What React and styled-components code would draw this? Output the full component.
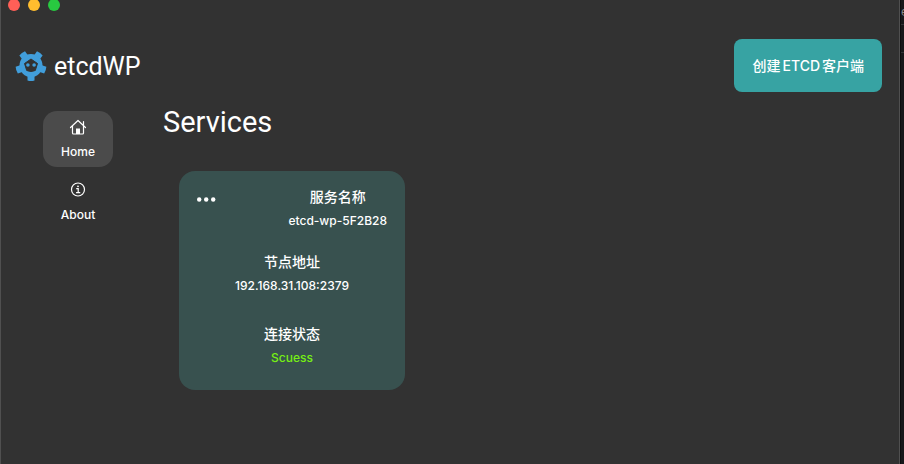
import React from "react";
import styled, { createGlobalStyle } from "styled-components";

const GlobalStyle = createGlobalStyle`
  *, *::before, *::after { box-sizing: border-box; }
  body {
    margin: 0;
    background: #17181a;
    color: #fff;
    font-family: Inter, "Noto Sans CJK SC", sans-serif;
    -webkit-font-smoothing: antialiased;
  }
  h1, h2, p, dl, dt, dd { margin: 0; font-weight: 400; }
`;

const Desktop = styled.div`
  display: grid;
  grid-template-columns: minmax(0, 1fr) 4px;
  min-height: 100vh;
`;

const Window = styled.div`
  display: flex;
  flex-direction: column;
  background: #323232;
  border: solid #505050;
  border-width: 0 1px;
`;

const Behind = styled.aside`
  overflow: hidden;
  color: #8a8a8a;
  font-size: 12px;
  line-height: 24px;
  border-left: 1px solid #0c0d0e;
`;

const BehindRow = styled.div`
  height: ${(p) => p.$height}px;
  border-bottom: 1px solid #333537;
`;

const TitleBar = styled.div`
  display: flex;
  align-items: flex-end;
  gap: 8px;
  height: 11px;
  padding-left: 7px;
  overflow: hidden;
`;

const Light = styled.button`
  flex: none;
  width: 12px;
  height: 12px;
  padding: 0;
  border: 0;
  border-radius: 50%;
  background: ${(p) => p.$color};
`;

const Header = styled.header`
  display: flex;
  align-items: center;
  justify-content: space-between;
  padding: 28px 17px 0 14px;
`;

const Brand = styled.div`
  display: flex;
  align-items: center;
  gap: 7px;
`;

const BrandName = styled.h1`
  padding-top: 2px;
  font-family: Roboto, Inter, sans-serif;
  font-size: 25px;
  line-height: 32px;
`;

const CreateButton = styled.button`
  display: flex;
  gap: 2px;
  padding: 16px 18px;
  border: 0;
  border-radius: 8px;
  background: #37a3a3;
  color: #fff;
  font: 500 14px/21px Inter, "Noto Sans CJK SC", sans-serif;
`;

const Body = styled.div`
  display: flex;
  flex: 1;
`;

const Sidebar = styled.nav`
  display: flex;
  flex-direction: column;
  gap: 7px;
  width: 154px;
  padding: 19px 42px 0;
`;

const NavItem = styled.a`
  display: flex;
  flex-direction: column;
  align-items: center;
  gap: 8px;
  padding: 7px 0;
  border-radius: 14px;
  background: ${(p) => (p.$active ? "#4b4b4b" : "transparent")};
  color: #fff;
  font-size: 12px;
  font-weight: 500;
  line-height: 16px;
  text-decoration: none;
`;

const Main = styled.main`
  flex: 1;
  padding: 9px 8px 24px;
`;

const Heading = styled.h2`
  font-family: Roboto, Inter, sans-serif;
  font-size: 29px;
  line-height: 42px;
`;

const Cards = styled.div`
  display: flex;
  flex-wrap: wrap;
  gap: 16px;
  padding: 28px 16px 0;
`;

const Card = styled.article`
  width: 226px;
  padding: 14px 18px 20px;
  border-radius: 16px;
  background: #38514f;
`;

const CardTop = styled.div`
  display: flex;
  align-items: flex-start;
  justify-content: space-between;
  margin-bottom: 17px;
`;

const MoreButton = styled.button`
  display: flex;
  padding: 8px 0;
  border: 0;
  background: none;
  color: #fff;
`;

const Field = styled.dl`
  text-align: center;
  & + & {
    margin-top: 24px;
  }
`;

const Term = styled.dt`
  font-size: 14px;
  font-weight: 500;
  line-height: 24px;
`;

const Value = styled.dd`
  color: ${(p) => (p.$ok ? "#76f013" : "#fff")};
  font-size: 12px;
  font-weight: 500;
  line-height: 24px;
`;

const Logo = () => (
  <svg width="32" height="32" viewBox="0 0 32 32" aria-hidden="true">
    <g fill="#419edb">
      {[0, 72, 144, 216, 288].map((a) => (
        <path key={a} d="M12.5 30.5V25h7v5.500q-3.500 1-7 0Z" transform={`rotate(${a} 16 15.500)`} />
      ))}
      <circle cx="16" cy="15.500" r="11.500" />
    </g>
    <path d="M16 9l6.500 4.500-2.200 7q-4.300 2-8.600 0L9.500 13.500Z" fill="#323232" stroke="#323232" strokeWidth="1" strokeLinejoin="round" />
    <circle cx="12.900" cy="15" r="1.800" fill="#419edb" />
    <circle cx="19.100" cy="15" r="1.800" fill="#419edb" />
  </svg>
);

const HomeIcon = () => (
  <svg width="18" height="18" viewBox="0 0 18 18" fill="none" stroke="#fff" strokeWidth="1.200" strokeLinecap="round" strokeLinejoin="round" aria-hidden="true">
    <path d="M1.500 9.500 9 2.500l7.500 7M3.500 8V15q0 1 1 1h9q1 0 1-1V8M14.500 7V3.500" />
    <path d="M7 10.500h4V16H7Z" fill="#fff" stroke="none" />
  </svg>
);

const InfoIcon = () => (
  <svg width="18" height="18" viewBox="0 0 18 18" fill="none" stroke="#fff" strokeWidth="1.200" strokeLinecap="round" aria-hidden="true">
    <circle cx="9" cy="8.500" r="6.500" />
    <path d="M7.700 7.700h1.500v4M7.500 11.700h3.300" />
    <circle cx="9" cy="5.300" r="0.900" fill="#fff" stroke="none" />
  </svg>
);

const lights = [
  ["Close", "#ff5f57"],
  ["Minimize", "#ffbd2e"],
  ["Zoom", "#28c940"],
];

export default function App() {
  return (
    <>
      <GlobalStyle />
      <Desktop>
        <Window>
          <TitleBar>
            {lights.map(([label, color]) => (
              <Light key={label} aria-label={label} $color={color} />
            ))}
          </TitleBar>
          <Header>
            <Brand>
              <Logo />
              <BrandName>etcdWP</BrandName>
            </Brand>
            <CreateButton>
              <span>创建</span>
              <span>ETCD</span>
              <span>客户端</span>
            </CreateButton>
          </Header>
          <Body>
            <Sidebar>
              <NavItem href="#home" $active aria-current="page">
                <HomeIcon />
                Home
              </NavItem>
              <NavItem href="#about">
                <InfoIcon />
                About
              </NavItem>
            </Sidebar>
            <Main>
              <Heading>Services</Heading>
              <Cards>
                <Card>
                  <CardTop>
                    <MoreButton aria-label="More">
                      <svg width="20" height="12" viewBox="0 0 20 12" fill="currentColor" aria-hidden="true">
                        <circle cx="2.200" cy="6.500" r="2.200" />
                        <circle cx="9.200" cy="6.500" r="2.200" />
                        <circle cx="16.200" cy="6.500" r="2.200" />
                      </svg>
                    </MoreButton>
                    <Field>
                      <Term>服务名称</Term>
                      <Value>etcd-wp-5F2B28</Value>
                    </Field>
                  </CardTop>
                  <Field>
                    <Term>节点地址</Term>
                    <Value>192.168.31.108:2379</Value>
                  </Field>
                  <Field>
                    <Term>连接状态</Term>
                    <Value $ok>Scuess</Value>
                  </Field>
                </Card>
              </Cards>
            </Main>
          </Body>
        </Window>
        <Behind>
          <BehindRow $height={25}>e</BehindRow>
          <BehindRow $height={28} />
        </Behind>
      </Desktop>
    </>
  );
}
